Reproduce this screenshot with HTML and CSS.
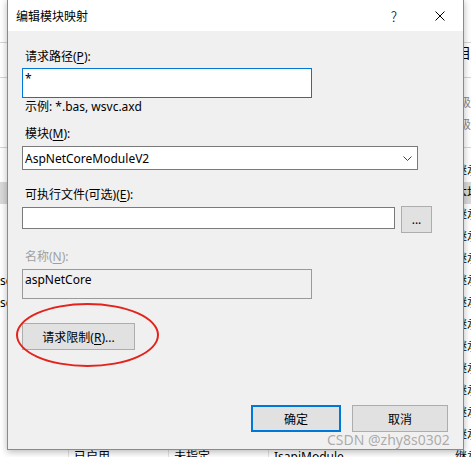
FILE: index.html
```html
<!DOCTYPE html>
<html lang="zh-CN">
<head>
    <meta charset="UTF-8">
    <title>编辑模块映射</title>
    <link rel="stylesheet" href="styles.css">
</head>
<body>
    <!-- IIS list behind the dialog -->
    <div class="backdrop">
        <div class="bd-top"></div>
        <div class="bd-head">处理程序映射项目</div>
        <div class="bd-desc">
            <p>使用此功能指定处理特定请求类型的响应的资源级</p>
            <p>处理程序映射列表中的条目级</p>
        </div>
        <div class="bd-colhead"></div>
        <div class="bd-row"><span></span><span></span><span></span><span></span><span>继承</span></div>
        <div class="bd-row selected"><span></span><span></span><span></span><span></span><span>本地</span></div>
        <div class="bd-row"><span></span><span></span><span></span><span></span><span>继承</span></div>
        <div class="bd-row"><span></span><span></span><span></span><span></span><span>继承</span></div>
        <div class="bd-row"><span></span><span></span><span></span><span></span><span>继承</span></div>
        <div class="bd-row"><span>sc</span><span></span><span></span><span></span><span>继承</span></div>
        <div class="bd-row"><span>sc</span><span></span><span></span><span></span><span>继承</span></div>
        <div class="bd-row"><span></span><span></span><span></span><span></span><span>继承</span></div>
        <div class="bd-row"><span></span><span></span><span></span><span></span><span>继承</span></div>
        <div class="bd-row"><span></span><span></span><span></span><span></span><span>继承</span></div>
        <div class="bd-row"><span></span><span></span><span></span><span></span><span>继承</span></div>
        <div class="bd-row"><span></span><span></span><span></span><span></span><span>继承</span></div>
        <div class="bd-row"><span></span><span></span><span></span><span></span><span>继承</span></div>
        <div class="bd-row"><span></span><span>已启用</span><span>未指定</span><span>IsapiModule</span><span>继承</span></div>
    </div>

    <!-- Edit module mapping dialog -->
    <div class="dialog">
        <div class="titlebar">
            <span class="title">编辑模块映射</span>
            <span class="tb-btn">?</span>
            <span class="tb-btn">
                <svg width="10" height="10" viewBox="0 0 10 10"><path d="M0.5 0.5L9.5 9.5M9.5 0.5L0.5 9.5" stroke="#000" stroke-width="1" fill="none"/></svg>
            </span>
        </div>
        <div class="dlg-body">
            <label class="lbl">请求路径(<u>P</u>):</label>
            <div class="field tall focused">*</div>
            <div class="hint">示例: *.bas, wsvc.axd</div>

            <label class="lbl gap-m">模块(<u>M</u>):</label>
            <div class="select">
                <span>AspNetCoreModuleV2</span>
                <svg width="9" height="5" viewBox="0 0 9 5"><polyline points="0.5,0.5 4.5,4.5 8.5,0.5" stroke="#444" stroke-width="1" fill="none"/></svg>
            </div>

            <label class="lbl gap-l">可执行文件(可选)(<u>E</u>):</label>
            <div class="exe-row">
                <div class="field exe"></div>
                <button class="btn browse">...</button>
            </div>

            <label class="lbl gap-l disabled">名称(<u>N</u>):</label>
            <div class="field tall readonly">aspNetCore</div>

            <button class="btn limits">请求限制(<u>R</u>)...</button>

            <div class="footer">
                <button class="btn ok">确定</button>
                <button class="btn cancel">取消</button>
            </div>
            <div class="circle"></div>
        </div>
    </div>

    <div class="watermark">CSDN @zhy8s0302</div>
</body>
</html>
```

FILE: styles.css
```css
html { overflow: hidden; }
body {
    margin: 0;
    width: 471px;
    height: 457px;
    overflow: hidden;
    position: relative;
    background: #fff;
    font-family: "Noto Sans", "Noto Sans CJK SC", sans-serif;
    font-size: 12px;
    color: #000;
}

/* backdrop list */
.backdrop { width: 471px; }
.bd-top { height: 42px; border-bottom: 1px solid #d6d6d6; }
.bd-head {
    height: 34px;
    line-height: 20px;
    text-align: right;
    font-size: 14px;
    white-space: nowrap;
    border-bottom: 1px solid #d6d6d6;
}
.bd-desc {
    height: 55px;
    padding-top: 14px;
    border-bottom: 1px solid #d6d6d6;
    color: #8a8a8a;
    text-align: right;
    white-space: nowrap;
}
.bd-desc p { margin: 0; line-height: 22px; }
.bd-colhead { height: 12px; }
.bd-row {
    display: grid;
    grid-template-columns: 68px 100px 100px 182px 1fr;
    height: 22px;
    line-height: 22px;
    white-space: nowrap;
}
.bd-row span { padding-left: 5px; border-left: 1px solid #e2e2e2; overflow: hidden; }
.bd-row span:first-child { padding-left: 0; border-left: none; }
.bd-row span:last-child { border-left: none; }
.bd-row.selected { background: #d9d9d9; }

/* dialog */
.dialog {
    position: absolute;
    left: 7px;
    top: -1px;
    width: 457px;
    height: 451px;
    box-sizing: border-box;
    border: 1px solid #8a8a8a;
    background: #f0f0f0;
    display: flex;
    flex-direction: column;
    box-shadow: 0 2px 7px rgba(0, 0, 0, 0.28);
}
.titlebar {
    height: 31px;
    background: #fff;
    display: flex;
    align-items: center;
    font-family: "Noto Sans CJK SC", sans-serif;
}
.title { flex: 1; padding-left: 8px; }
.tb-btn {
    width: 46px;
    height: 31px;
    display: flex;
    align-items: center;
    justify-content: center;
    font-size: 14px;
    font-weight: 300;
}
.dlg-body {
    flex: 1;
    display: flex;
    flex-direction: column;
    align-items: flex-start;
    padding: 18px 15px 17px 14px;
    position: relative;
}
u { text-decoration: underline; text-underline-offset: 2px; }
.lbl { display: block; height: 16px; line-height: 16px; padding-left: 3px; }
.lbl.gap-m { margin-top: 11px; }
.lbl.gap-l { margin-top: 17px; }
.lbl.disabled { color: #a0a0a0; margin-top: 16px; }
.field {
    box-sizing: border-box;
    width: 290px;
    background: #fff;
    border: 1px solid #7a7a7a;
    padding: 2px 2px;
    line-height: 16px;
    margin-top: 3px;
}
.field.tall { height: 30px; }
.field.focused { border-color: #0078d7; }
.field.readonly { background: #f0f0f0; border-color: #9a9a9a; margin-top: 4px; }
.hint { height: 16px; line-height: 16px; padding-left: 3px; margin-top: 1px; }
.select {
    box-sizing: border-box;
    width: 396px;
    height: 24px;
    margin-top: 4px;
    border: 1px solid #7a7a7a;
    background: #fff;
    display: flex;
    align-items: center;
    justify-content: space-between;
    padding: 0 5px 0 2px;
}
.exe-row { display: flex; gap: 6px; margin-top: 3px; align-items: flex-start; }
.field.exe { width: 373px; height: 22px; margin-top: 1px; }
.btn {
    box-sizing: border-box;
    height: 27px;
    border: 1px solid #adadad;
    background: #e1e1e1;
    font-family: "Noto Sans", "Noto Sans CJK SC", sans-serif;
    font-size: 12px;
    color: #000;
    padding: 0;
}
.browse { width: 31px; }
.limits { width: 113px; margin-top: 24px; }
.footer {
    margin-top: auto;
    align-self: stretch;
    display: flex;
    justify-content: flex-end;
    gap: 11px;
}
.ok { width: 90px; border: 2px solid #0078d7; }
.cancel { width: 96px; }

/* red annotation circle over the limits button */
.circle {
    position: absolute;
    left: 8px;
    top: 272px;
    width: 143px;
    height: 64px;
    box-sizing: border-box;
    border: 2.5px solid #e3231c;
    border-radius: 50%;
}
.watermark {
    position: absolute;
    left: 327px;
    top: 430px;
    font-size: 14px;
    color: rgba(140, 140, 140, 0.7);
    white-space: nowrap;
}
```
